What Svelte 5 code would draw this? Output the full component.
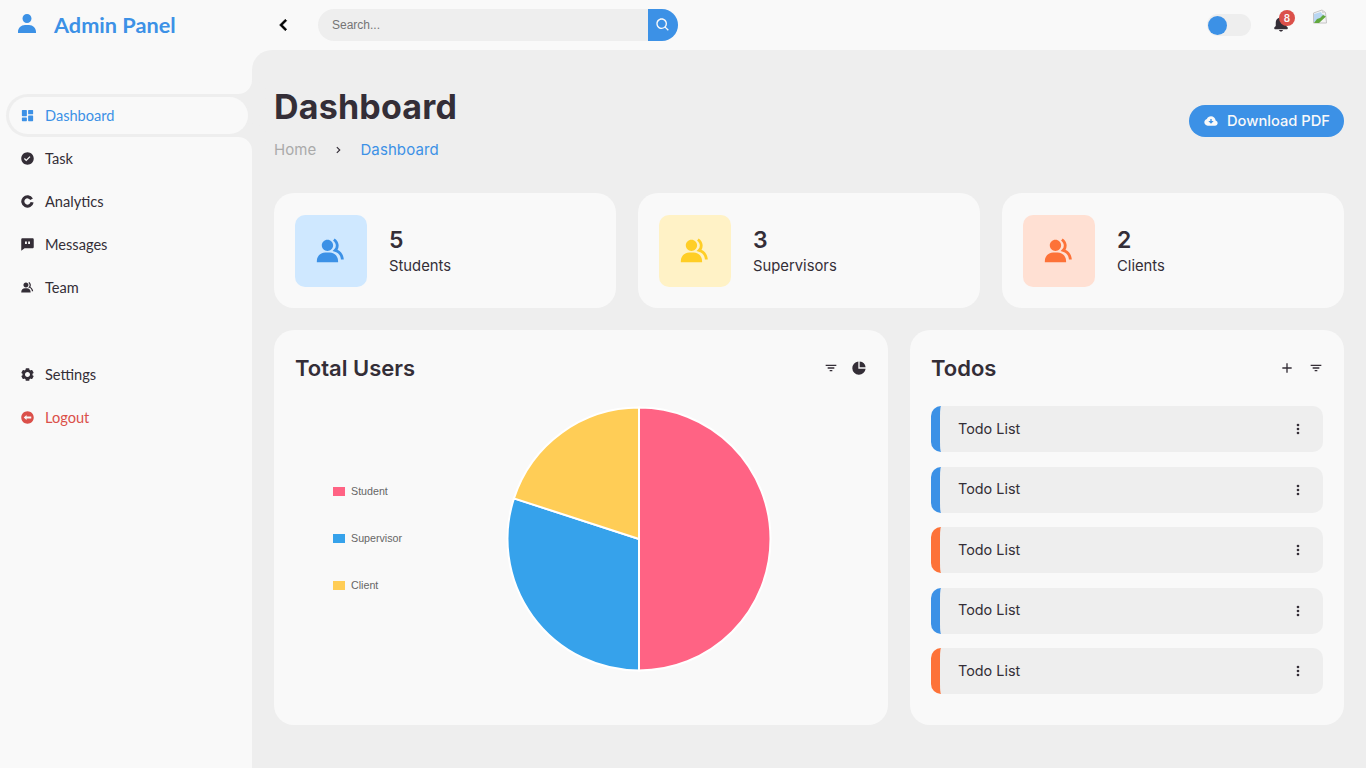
<script>
  const group = "M16.604 11.048a5.67 5.67 0 0 0 .751-3.44c-.179-1.784-1.175-3.361-2.803-4.44l-1.105 1.666c1.119.742 1.8 1.799 1.918 2.974a3.693 3.693 0 0 1-1.072 2.986l-1.192 1.192 1.618.475C18.951 13.701 19 17.957 19 18h2c0-1.789-.956-5.285-4.396-6.952zM9.5 12c2.206 0 4-1.794 4-4s-1.794-4-4-4-4 1.794-4 4 1.794 4 4 4zm1.5 1H8c-3.309 0-6 2.691-6 6v1h15v-1c0-3.309-2.691-6-6-6z";
  const filter = "M7 11h10v2H7zM4 7h16v2H4zm6 8h4v2h-4z";

  const menu = [
    { label: "Dashboard", active: true, d: "M4 13h6a1 1 0 0 0 1-1V4a1 1 0 0 0-1-1H4a1 1 0 0 0-1 1v8a1 1 0 0 0 1 1zm-1 7a1 1 0 0 0 1 1h6a1 1 0 0 0 1-1v-4a1 1 0 0 0-1-1H4a1 1 0 0 0-1 1v4zm10 0a1 1 0 0 0 1 1h6a1 1 0 0 0 1-1v-7a1 1 0 0 0-1-1h-6a1 1 0 0 0-1 1v7zm1-10h6a1 1 0 0 0 1-1V4a1 1 0 0 0-1-1h-6a1 1 0 0 0-1 1v5a1 1 0 0 0 1 1z" },
    { label: "Task", d: "M12 2C6.486 2 2 6.486 2 12s4.486 10 10 10 10-4.486 10-10S17.514 2 12 2zm-1.999 14.413-3.713-3.705L7.7 11.292l2.299 2.295 5.294-5.294 1.414 1.414-6.706 6.706z" },
    { label: "Analytics", d: "M20.66 7A10 10 0 1 0 21.85 13.74L16.92 12.87A5 5 0 1 1 16.33 9.500Z" },
    { label: "Messages", d: "M20 2H4c-1.103 0-2 .897-2 2v18l5.333-4H20c1.103 0 2-.897 2-2V4c0-1.103-.897-2-2-2zM11 11H8V7h3v4zm5 0h-3V7h3v4z" },
    { label: "Team", d: group }
  ];
  const bottom = [
    { label: "Settings", d: "m2.344 15.271 2 3.46a1 1 0 0 0 1.366.365l1.396-.806c.58.457 1.221.832 1.895 1.112V21a1 1 0 0 0 1 1h4a1 1 0 0 0 1-1v-1.598a8.094 8.094 0 0 0 1.895-1.112l1.396.806c.477.275 1.091.11 1.366-.365l2-3.46a1.004 1.004 0 0 0-.365-1.366l-1.372-.793a7.683 7.683 0 0 0-.002-2.224l1.372-.793c.476-.275.641-.89.365-1.366l-2-3.46a1 1 0 0 0-1.366-.365l-1.396.806A8.034 8.034 0 0 0 15 4.598V3a1 1 0 0 0-1-1h-4a1 1 0 0 0-1 1v1.598A8.094 8.094 0 0 0 7.105 5.71L5.71 4.904a.999.999 0 0 0-1.366.365l-2 3.46a1.004 1.004 0 0 0 .365 1.366l1.372.793a7.683 7.683 0 0 0 0 2.224l-1.372.793c-.476.275-.641.89-.365 1.366zM12 8c2.206 0 4 1.794 4 4s-1.794 4-4 4-4-1.794-4-4 1.794-4 4-4z" },
    { label: "Logout", red: true, d: "M12 2C6.48 2 2 6.48 2 12s4.48 10 10 10 10-4.48 10-10S17.52 2 12 2zm6 11.5H10.5V16L6 12l4.500-4v2.500H18z" }
  ];

  const stats = [
    { value: 5, label: "Students", tone: "blue" },
    { value: 3, label: "Supervisors", tone: "yellow" },
    { value: 2, label: "Clients", tone: "orange" }
  ];

  const legend = [
    { label: "Student", color: "#ff6384" },
    { label: "Supervisor", color: "#36a2eb" },
    { label: "Client", color: "#ffcd56" }
  ];

  const todos = ["blue", "blue", "orange", "blue", "orange"];

  // pie slices, clockwise from the top, share of 10
  const slices = [
    { share: 5, color: "#ff6384" },
    { share: 3, color: "#36a2eb" },
    { share: 2, color: "#ffcd56" }
  ];
  let total = 0;
  function slicePath(share) {
    const r = 131.5;
    const a0 = (total / 10) * Math.PI * 2;
    total += share;
    const a1 = (total / 10) * Math.PI * 2;
    const large = share > 5 ? 1 : 0;
    const p = (a) => `${(133 + r * Math.sin(a)).toFixed(2)} ${(133 - r * Math.cos(a)).toFixed(2)}`;
    return `M133 133L${p(a0)}A${r} ${r} 0 ${large} 1 ${p(a1)}Z`;
  }
  const pie = slices.map((s) => ({ color: s.color, d: slicePath(s.share) }));
</script>

<div class="app">
  <aside class="sidebar">
    <div class="brand">
      <svg viewBox="0 0 24 24" width="24" height="24"><path d="M7.500 6.500C7.500 8.981 9.519 11 12 11s4.500-2.019 4.500-4.500S14.481 2 12 2 7.500 4.019 7.500 6.500zM20 21h1v-1c0-3.859-3.141-7-7-7h-4c-3.860 0-7 3.141-7 7v1h17z"></path></svg>
      <span>Admin Panel</span>
    </div>
    <ul class="menu">
      {#each menu as item}
        <li class:active={item.active}>
          <a href="#top">
            <svg viewBox="0 0 24 24" width="15" height="15"><path d={item.d}></path></svg>
            {item.label}
          </a>
        </li>
      {/each}
    </ul>
    <ul class="menu lower">
      {#each bottom as item}
        <li class:red={item.red}>
          <a href="#top">
            <svg viewBox="0 0 24 24" width="15" height="15"><path d={item.d}></path></svg>
            {item.label}
          </a>
        </li>
      {/each}
    </ul>
  </aside>

  <div class="content">
    <nav class="topbar">
      <svg class="back" viewBox="0 0 24 24" width="24" height="24"><path d="M13.293 6.293 7.586 12l5.707 5.707 1.414-1.414L10.414 12l4.293-4.293z"></path></svg>
      <form class="search">
        <input type="text" placeholder="Search..." />
        <button type="button" aria-label="Search">
          <svg viewBox="0 0 24 24" width="16" height="16"><path d="M10 18a7.952 7.952 0 0 0 4.897-1.688l4.396 4.396 1.414-1.414-4.396-4.396A7.952 7.952 0 0 0 18 10c0-4.411-3.589-8-8-8s-8 3.589-8 8 3.589 8 8 8zm0-14c3.309 0 6 2.691 6 6s-2.691 6-6 6-6-2.691-6-6 2.691-6 6-6z"></path></svg>
        </button>
      </form>
      <div class="toggle"><span></span></div>
      <div class="bell">
        <svg viewBox="0 0 24 24" width="18" height="18"><path d="M12 22c1.311 0 2.407-.834 2.818-2H9.182C9.593 21.166 10.689 22 12 22zm7-7.414V10c0-3.217-2.185-5.927-5.145-6.742C13.562 2.520 12.846 2 12 2s-1.562.520-1.855 1.258C7.185 4.074 5 6.783 5 10v4.586l-1.707 1.707A.996.996 0 0 0 3 17v1a1 1 0 0 0 1 1h16a1 1 0 0 0 1-1v-1a.996.996 0 0 0-.293-.707L19 14.586z"></path></svg>
        <span class="badge">8</span>
      </div>
      <svg class="broken" viewBox="0 0 16 16" width="16" height="16">
        <path d="M1.500 4 10 1l3.500 2.500 1 10.500H1.500z" fill="#f4f4f4" stroke="#c4c4c4" stroke-width="1"></path>
        <path d="M10 1v3h3.500z" fill="#d8d8d8"></path>
        <path d="M2 5 9 3l1 2 3 1-9 7H2z" fill="#b9d6f2"></path>
        <path d="M2 14l3-4 3-1 3-3 3 1.500L7 14z" fill="#62a83e"></path>
      </svg>
    </nav>

    <main>
      <div class="head">
        <div>
          <h1>Dashboard</h1>
          <div class="crumbs">
            <span class="home">Home</span>
            <svg viewBox="0 0 24 24" width="14" height="14"><path d="M10.707 17.707 16.414 12l-5.707-5.707-1.414 1.414L13.586 12l-4.293 4.293z"></path></svg>
            <span class="here">Dashboard</span>
          </div>
        </div>
        <button class="download">
          <svg viewBox="0 0 24 24" width="16" height="16"><path d="M18.944 11.112C18.507 7.670 15.560 5 12 5 9.244 5 6.850 6.611 5.757 9.150 3.609 9.792 2 11.820 2 14c0 2.757 2.243 5 5 5h11c2.206 0 4-1.794 4-4a4.010 4.010 0 0 0-3.056-3.888zM12 16l-4-4h3V9h2v3h3l-4 4z"></path></svg>
          Download PDF
        </button>
      </div>

      <section class="stats">
        {#each stats as s}
          <div class="card stat">
            <div class="stat-icon {s.tone}">
              <svg viewBox="0 0 24 24" width="34" height="34"><path d={group}></path></svg>
            </div>
            <div class="stat-text">
              <h3>{s.value}</h3>
              <p>{s.label}</p>
            </div>
          </div>
        {/each}
      </section>

      <section class="panels">
        <div class="card users">
          <div class="panel-head">
            <h2>Total Users</h2>
            <svg viewBox="0 0 24 24" width="16" height="16"><path d={filter}></path></svg>
            <svg class="after" viewBox="0 0 24 24" width="16" height="16"><path d="M13 2.100V11h8.900A10 10 0 0 0 13 2.100zM11 2.100A10 10 0 1 0 21.900 13H11z"></path></svg>
          </div>
          <div class="chart">
            <ul class="legend">
              {#each legend as l}
                <li><i style="background:{l.color}"></i>{l.label}</li>
              {/each}
            </ul>
            <svg class="pie" viewBox="0 0 266 266" width="266" height="266">
              {#each pie as p}
                <path d={p.d} fill={p.color} stroke="#fff" stroke-width="2"></path>
              {/each}
            </svg>
          </div>
        </div>

        <div class="card todos">
          <div class="panel-head">
            <h2>Todos</h2>
            <svg viewBox="0 0 24 24" width="16" height="16"><path d="M19 11h-6V5h-2v6H5v2h6v6h2v-6h6z"></path></svg>
            <svg class="after" viewBox="0 0 24 24" width="16" height="16"><path d={filter}></path></svg>
          </div>
          <ul class="todo-list">
            {#each todos as tone}
              <li class={tone}>
                <span>Todo List</span>
                <svg viewBox="0 0 24 24" width="16" height="16"><circle cx="12" cy="6" r="2"></circle><circle cx="12" cy="12" r="2"></circle><circle cx="12" cy="18" r="2"></circle></svg>
              </li>
            {/each}
          </ul>
        </div>
      </section>
    </main>
  </div>
</div>

<style>
  :global(body) {
    background: #f9f9f9;
    color: #342e37;
    font-family: "Inter", "Open Sans", sans-serif;
  }
  .app {
    display: flex;
    height: 768px;
    overflow: hidden;
    background: #f9f9f9;
  }
  svg {
    fill: currentColor;
    flex: none;
    display: block;
  }
  ul {
    list-style: none;
    margin: 0;
    padding: 0;
  }

  /* sidebar */
  .sidebar {
    width: 252px;
    flex: none;
    font-family: "Lato", sans-serif;
  }
  .brand {
    height: 50px;
    display: flex;
    align-items: center;
    gap: 15px;
    padding-left: 15px;
    color: #3c91e6;
    font-size: 21.7px;
    font-weight: 700;
  }
  .brand svg {
    margin-top: -3px;
  }
  .menu {
    margin-top: 44px;
    padding-left: 6px;
  }
  .menu.lower {
    margin-top: 44px;
  }
  .menu li {
    position: relative;
    height: 43px;
    padding: 3px 4px 3px 3px;
    box-sizing: border-box;
    border-radius: 22px 0 0 22px;
  }
  .menu li.active {
    background: #eeeeee;
  }
  .menu li.active::before,
  .menu li.active::after {
    content: "";
    position: absolute;
    right: 0;
    width: 28px;
    height: 28px;
    border-radius: 50%;
    box-shadow: 14px 14px 0 #eeeeee;
  }
  .menu li.active::before {
    top: -28px;
  }
  .menu li.active::after {
    bottom: -28px;
    box-shadow: 14px -14px 0 #eeeeee;
  }
  .menu a {
    display: flex;
    align-items: center;
    gap: 10px;
    height: 100%;
    box-sizing: border-box;
    padding: 1px 0 1px 11px;
    border-radius: 20px;
    background: #f9f9f9;
    color: #342e37;
    font-size: 14.6px;
    text-decoration: none;
    position: relative;
    z-index: 1;
  }
  .menu li.active a {
    color: #3c91e6;
  }
  .menu li.red a {
    color: #db504a;
  }

  /* top bar */
  .content {
    flex: 1;
    min-width: 0;
    display: flex;
    flex-direction: column;
  }
  .topbar {
    height: 50px;
    flex: none;
    display: flex;
    align-items: center;
    padding-left: 20px;
    padding-right: 38px;
    box-sizing: border-box;
  }
  .back {
    color: #000;
    stroke: #000;
    stroke-width: 0.6;
  }
  .search {
    display: flex;
    width: 360px;
    height: 32px;
    margin-left: 22px;
  }
  .search input {
    flex: 1;
    min-width: 0;
    border: none;
    outline: none;
    background: #eeeeee;
    border-radius: 36px 0 0 36px;
    padding: 0 14px;
    font-family: "Liberation Sans", sans-serif;
    font-size: 12px;
    color: #342e37;
  }
  .search input::placeholder {
    color: #757575;
  }
  .search button {
    width: 30px;
    border: none;
    padding: 0;
    background: #3c91e6;
    color: #f9f9f9;
    border-radius: 0 36px 36px 0;
    display: flex;
    align-items: center;
    justify-content: center;
  }
  .toggle {
    margin-left: auto;
    width: 44px;
    height: 22px;
    background: #eeeeee;
    border-radius: 22px;
    display: flex;
    align-items: center;
    padding-left: 1px;
    box-sizing: border-box;
  }
  .toggle span {
    width: 19px;
    height: 19px;
    border-radius: 50%;
    background: #3c91e6;
  }
  .bell {
    position: relative;
    margin-left: 21px;
    margin-top: -3px;
    color: #342e37;
  }
  .badge {
    position: absolute;
    top: -5px;
    right: -5px;
    width: 16px;
    height: 16px;
    border-radius: 50%;
    background: #db504a;
    color: #f9f9f9;
    font-size: 10px;
    font-weight: 600;
    display: flex;
    align-items: center;
    justify-content: center;
  }
  .broken {
    margin-left: 22px;
    margin-top: -17px;
  }

  /* main */
  main {
    flex: 1;
    background: #eeeeee;
    border-top-left-radius: 20px;
    padding: 36px 22px;
  }
  .head {
    display: flex;
    justify-content: space-between;
    align-items: center;
  }
  h1 {
    margin: 0;
    font-size: 34px;
    font-weight: 700;
    line-height: 42px;
    letter-spacing: 0.2px;
  }
  .crumbs {
    display: flex;
    align-items: center;
    gap: 15px;
    margin-top: 11px;
    font-size: 15px;
    line-height: 22px;
    letter-spacing: 0.1px;
  }
  .home {
    color: #aaaaaa;
  }
  .here {
    color: #3c91e6;
  }
  .download {
    width: 155px;
    height: 32px;
    border: none;
    border-radius: 36px;
    background: #3c91e6;
    color: #f9f9f9;
    font-family: inherit;
    font-size: 14.7px;
    font-weight: 500;
    display: flex;
    align-items: center;
    justify-content: center;
    gap: 8px;
    margin-top: -5px;
    padding-bottom: 1px;
  }
  .stats {
    display: grid;
    grid-template-columns: repeat(3, 1fr);
    gap: 22px;
    margin-top: 32px;
  }
  .card {
    background: #f9f9f9;
    border-radius: 20px;
  }
  .stat {
    height: 115px;
    box-sizing: border-box;
    padding: 0 21px;
    display: flex;
    align-items: center;
    gap: 22px;
  }
  .stat-icon {
    width: 72px;
    height: 72px;
    border-radius: 10px;
    display: flex;
    align-items: center;
    justify-content: center;
  }
  .stat-icon.blue {
    background: #cfe8ff;
    color: #3c91e6;
  }
  .stat-icon.yellow {
    background: #fff2c6;
    color: #ffce26;
  }
  .stat-icon.orange {
    background: #ffe0d3;
    color: #fd7238;
  }
  .stat-text {
    padding-top: 3px;
  }
  .stat h3 {
    margin: 0;
    font-size: 23px;
    font-weight: 600;
    line-height: 28px;
  }
  .stat p {
    margin: 0;
    font-size: 14.8px;
    line-height: 25px;
  }
  .panels {
    display: flex;
    gap: 22px;
    margin-top: 22px;
  }
  .users {
    width: 614px;
    flex: none;
    height: 395px;
    box-sizing: border-box;
    padding: 24px 21px;
  }
  .todos {
    flex: 1;
    height: 395px;
    box-sizing: border-box;
    padding: 24px 21px;
  }
  .panel-head {
    display: flex;
    align-items: center;
    height: 28px;
    gap: 12px;
  }
  .todos .panel-head {
    gap: 13px;
    margin-right: -1px;
  }
  .panel-head h2 {
    margin: 0 auto 0 0;
    font-size: 22px;
    font-weight: 600;
  }
  .chart {
    display: flex;
    align-items: center;
    margin-top: 23.5px;
    padding-left: 38px;
  }
  .legend {
    width: 175px;
    flex: none;
    display: flex;
    flex-direction: column;
    gap: 34px;
    font-family: "Liberation Sans", sans-serif;
    font-size: 10.7px;
    line-height: 13px;
    color: #666666;
  }
  .legend li {
    display: flex;
    align-items: center;
    gap: 6px;
  }
  .legend i {
    width: 12px;
    height: 9px;
    display: block;
  }
  .pie {
    margin-left: -2.5px;
  }
  .todo-list {
    display: flex;
    flex-direction: column;
    gap: 14.5px;
    margin-top: 24px;
  }
  .todo-list li {
    height: 46px;
    box-sizing: border-box;
    background: #eeeeee;
    border-radius: 10px;
    border-left: 9px solid #3c91e6;
    padding: 0 17px 2px 18px;
    display: flex;
    align-items: center;
    justify-content: space-between;
    font-size: 14.4px;
  }
  .todo-list li svg {
    margin-top: 2px;
  }
  .todo-list li.orange {
    border-left-color: #fd7238;
  }
</style>
